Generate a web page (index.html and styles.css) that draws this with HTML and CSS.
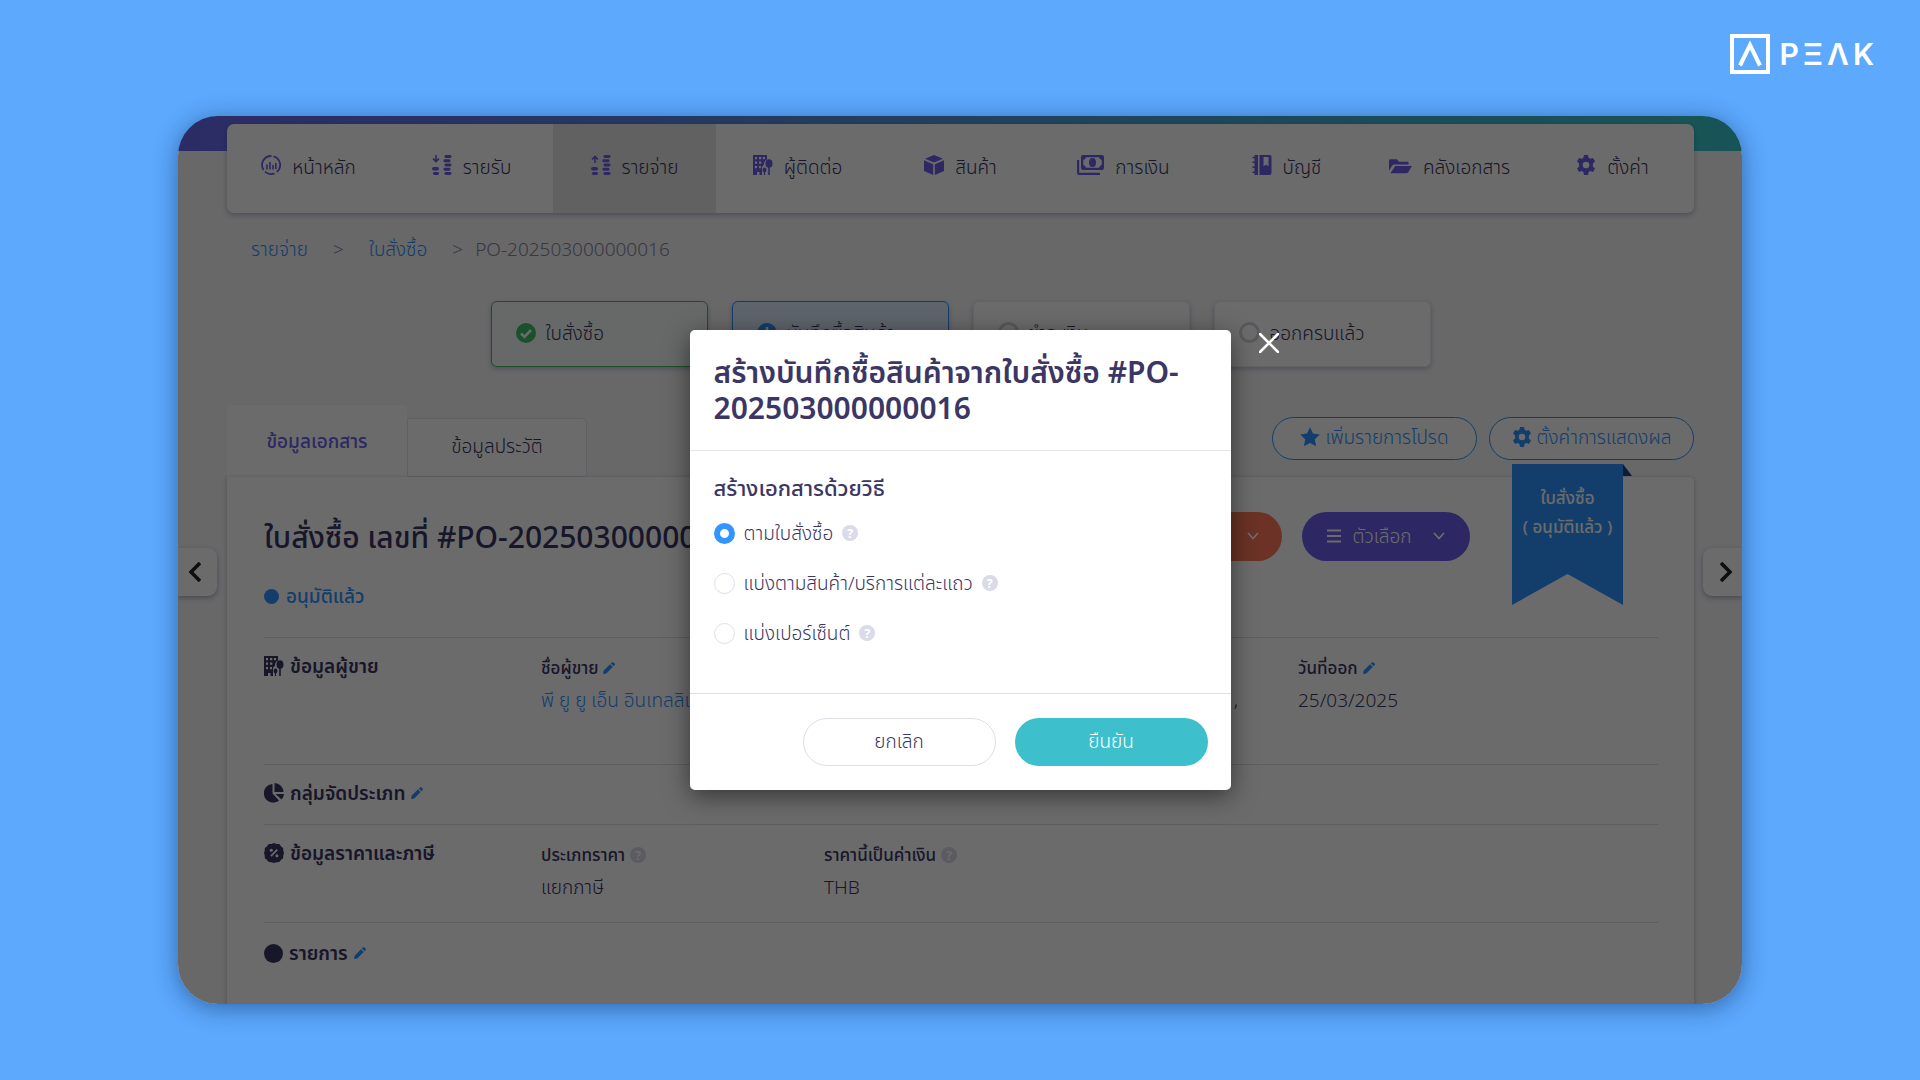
FILE: index.html
```html
<!DOCTYPE html>
<html lang="th">
<head>
<meta charset="utf-8">
<meta name="viewport" content="width=device-width, initial-scale=1">
<title>PEAK</title>
<link rel="stylesheet" href="styles.css">
</head>
<body>
<svg class="sprite" aria-hidden="true">
  <symbol id="i-chart" viewBox="0 0 20 20"><g fill="none" stroke="currentColor" stroke-width="1.800"><path d="M12.500 1.300A9 9 0 0 1 15.800 17M13.500 18.300A9 9 0 0 1 4 16.700M2.600 15A9 9 0 0 1 10.500 1"/><path d="M6 9.500v5M9 7v7.500M12 10v4.500M14.800 8v6" stroke-width="1.600"/></g></symbol>
  <symbol id="i-income" viewBox="0 0 20 20"><path d="M3.200 0h1.600v4.500L6.500 3l1 1.200L4 7.800.500 4.200l1-1.200 1.700 1.500z"/><rect x="0" y="12" width="7" height="3.400" rx="1.700"/><rect x="1" y="17" width="6" height="3" rx="1.400"/><rect x="12.500" y="0" width="7" height="3" rx="1.400"/><rect x="11.500" y="4.300" width="7" height="3" rx="1.400"/><rect x="12.500" y="8.500" width="7" height="3" rx="1.400"/><rect x="11.500" y="12.700" width="7" height="3" rx="1.400"/><rect x="12.500" y="17" width="7" height="3" rx="1.400"/></symbol>
  <symbol id="i-expense" viewBox="0 0 20 20"><path d="M3.200 8h1.600V3.500L6.500 5l1-1.200L4 .200.500 3.800l1 1.200 1.700-1.500z"/><rect x="0" y="12" width="7" height="3.400" rx="1.700"/><rect x="1" y="17" width="6" height="3" rx="1.400"/><rect x="12.500" y="0" width="7" height="3" rx="1.400"/><rect x="11.500" y="4.300" width="7" height="3" rx="1.400"/><rect x="12.500" y="8.500" width="7" height="3" rx="1.400"/><rect x="11.500" y="12.700" width="7" height="3" rx="1.400"/><rect x="12.500" y="17" width="7" height="3" rx="1.400"/></symbol>
  <symbol id="i-building" viewBox="0 0 20 20"><path fill-rule="evenodd" d="M0 0h14v4.500C12 5.500 11 7 11 9.500c0 .800-1.500 1-2 3V20H6.500v-3H4v3H0zM2 2v2.300h2V2zM6 2v2.300h2.300V2zM10 2v2.300h2V2zM2 6.500v2.300h2V6.500zM6 6.500v2.300h2.300V6.500zM2 11v2.300h2V11zM6 11v2.300h2V11z"/><ellipse cx="16" cy="8.500" rx="3.500" ry="4.300"/><path d="M15.200 12h1.600v8h-1.600z"/><ellipse cx="11.500" cy="15" rx="2" ry="2.400"/><path d="M10.900 16h1.200v4h-1.200z"/></symbol>
  <symbol id="i-box" viewBox="0 0 20 20"><path d="M10 0l9 3.700L10 7.500 1 3.700zM0 5.200l9.200 4V20L0 16zM20 5.200l-9.200 4V20L20 16z"/></symbol>
  <symbol id="i-money" viewBox="0 0 27 20"><path d="M0 5h2.200v12.800H23V20H2a2 2 0 0 1-2-2z"/><path fill-rule="evenodd" d="M6 0h19a2 2 0 0 1 2 2v11a2 2 0 0 1-2 2H6a2 2 0 0 1-2-2V2a2 2 0 0 1 2-2zm3 2.300Q8.500 4.500 6.300 5v5q2.200.500 2.700 2.700h13q.500-2.200 2.700-2.700V5Q22.500 4.500 22 2.300z"/><ellipse cx="15.500" cy="7.500" rx="3.500" ry="4.500"/></symbol>
  <symbol id="i-book" viewBox="0 0 19 20"><path d="M2 0h3.500v20H2v-2H0v-1.500h2V13H0v-1.500h2V8H0V6.500h2V3.200H0V1.700h2z"/><path fill-rule="evenodd" d="M7 0h10a2 2 0 0 1 2 2v16a2 2 0 0 1-2 2H7zm4 2v9.500l2.500-2 2.500 2V2z"/></symbol>
  <symbol id="i-folder" viewBox="0 0 24 20"><path d="M0 5.500A1.500 1.500 0 0 1 1.500 4H8l2.500 2.500H19A1.500 1.500 0 0 1 20.500 8v1.500H6Q4 9.500 3 11L0 16z"/><path d="M6.500 11H24l-4 6.500a2 2 0 0 1-1.700 1H1.500z"/></symbol>
  <symbol id="i-gear" viewBox="0 0 20 20"><path fill-rule="evenodd" d="M8 0h4l.600 2.800 1.700 1L17 3l2 3.400-2.100 2v3.200l2.100 2L17 17l-2.700-.900-1.700 1L12 20H8l-.600-2.900-1.700-1L3 17l-2-3.400 2.100-2V8.400L1 6.400 3 3l2.700.800 1.700-1zM10 6.700a3.300 3.300 0 1 0 0 6.600 3.300 3.300 0 0 0 0-6.600z"/></symbol>
  <symbol id="i-star" viewBox="0 0 20 20"><path d="M10 .300l3 6.300 6.800.900-5 4.800 1.300 6.900L10 15.900l-6.100 3.300 1.300-6.900-5-4.800L7 6.600z"/></symbol>
  <symbol id="i-pencil" viewBox="0 0 12 12"><path d="M0 12l.600-3.300L7 2.300 9.700 5l-6.400 6.400zM7.800 1.500L9 .400a1 1 0 0 1 1.400 0l1.200 1.200a1 1 0 0 1 0 1.400l-1.100 1.200z"/></symbol>
  <symbol id="i-pie" viewBox="0 0 20 20"><path d="M8.500 1v9.500l6.500 7A9.300 9.300 0 1 1 8.500 1z"/><path d="M10.500 0a9 9 0 0 1 9 9h-9zM11.500 11H20a9 9 0 0 1-2.500 5.500z"/></symbol>
  <symbol id="i-percent" viewBox="0 0 20 20"><path d="M10 0l2.500 .900 2.800.200 1.600 2.200 2.200 1.600.200 2.600L20 10l-.700 2.500-.200 2.800-2.200 1.600-1.600 2.200-2.800.200L10 20l-2.500-.700-2.800-.200-1.600-2.200L.900 15.300l-.200-2.800L0 10l.700-2.500.2-2.600 2.200-1.600 1.600-2.200 2.800-.200z"/><g class="knock"><path d="M6.300 12.500l6.400-6.400 1.200 1.200-6.400 6.400z"/><circle cx="7.300" cy="7.300" r="1.500"/><circle cx="12.900" cy="12.700" r="1.500"/></g></symbol>
  <symbol id="i-check" viewBox="0 0 20 20"><circle cx="10" cy="10" r="10"/><path d="M5 10.500l3.500 3.500L15 7" fill="none" stroke="#fff" stroke-width="2.600"/></symbol>
  <symbol id="i-plus" viewBox="0 0 20 20"><circle cx="10" cy="10" r="10"/><path d="M10 4v12M4 10h12" fill="none" stroke="#fff" stroke-width="2.600"/></symbol>
  <symbol id="i-down" viewBox="0 0 12 8"><path d="M1 1l5 5.500L11 1" fill="none" stroke="currentColor" stroke-width="1.800"/></symbol>
  <symbol id="i-menu" viewBox="0 0 14 14"><path d="M0 1.500h14M0 7h14M0 12.500h14" stroke="currentColor" stroke-width="2.200"/></symbol>
  <symbol id="i-left" viewBox="0 0 12 20"><path d="M11 1L2 10l9 9" fill="none" stroke="currentColor" stroke-width="3.600"/></symbol>
  <symbol id="i-close" viewBox="0 0 20 20"><path d="M1 1l18 18M19 1L1 19" fill="none" stroke="currentColor" stroke-width="2.600" stroke-linecap="round"/></symbol>
</svg>

<header class="brand">
  <svg class="brand-mark" viewBox="0 0 40 40" aria-hidden="true"><path d="M2 2h36v36H2zM10 31.500L20 11l10 20.500" fill="none" stroke="#fff" stroke-width="4"/></svg>
  <span class="brand-name"><span>P</span><span>Ξ</span><span>Λ</span><span>K</span></span>
</header>

<div class="screen">
  <nav class="menu">
    <a href="#"><svg class="icon"><use href="#i-chart"/></svg>หน้าหลัก</a>
    <a href="#"><svg class="icon"><use href="#i-income"/></svg>รายรับ</a>
    <a href="#" class="active"><svg class="icon"><use href="#i-expense"/></svg>รายจ่าย</a>
    <a href="#"><svg class="icon"><use href="#i-building"/></svg>ผู้ติดต่อ</a>
    <a href="#"><svg class="icon"><use href="#i-box"/></svg>สินค้า</a>
    <a href="#"><svg class="icon wide"><use href="#i-money"/></svg>การเงิน</a>
    <a href="#"><svg class="icon"><use href="#i-book"/></svg>บัญชี</a>
    <a href="#"><svg class="icon folder"><use href="#i-folder"/></svg>คลังเอกสาร</a>
    <a href="#"><svg class="icon"><use href="#i-gear"/></svg>ตั้งค่า</a>
  </nav>

  <div class="crumbs">
    <a href="#">รายจ่าย</a><span class="sep">&gt;</span><a href="#">ใบสั่งซื้อ</a><span class="sep last">&gt;</span><span>PO-202503000000016</span>
  </div>

  <ol class="steps">
    <li class="done"><svg class="icon"><use href="#i-check"/></svg>ใบสั่งซื้อ</li>
    <li class="current"><svg class="icon"><use href="#i-plus"/></svg>บันทึกซื้อสินค้า</li>
    <li><span class="ring"></span>ชำระเงิน</li>
    <li><span class="ring"></span>ออกครบแล้ว</li>
  </ol>

  <div class="tabs">
    <button class="tab selected" type="button">ข้อมูลเอกสาร</button>
    <button class="tab" type="button">ข้อมูลประวัติ</button>
    <div class="tools">
      <button class="outline" type="button"><svg class="icon"><use href="#i-star"/></svg>เพิ่มรายการโปรด</button>
      <button class="outline" type="button"><svg class="icon"><use href="#i-gear"/></svg>ตั้งค่าการแสดงผล</button>
    </div>
  </div>

  <main class="panel">
    <div class="ribbon"><span>ใบสั่งซื้อ</span><span>( อนุมัติแล้ว )</span></div>
    <div class="title-row">
      <h1>ใบสั่งซื้อ เลขที่ #PO-202503000000016</h1>
      <button class="pill orange" type="button" aria-label="สร้าง"><svg class="caret"><use href="#i-down"/></svg></button>
      <button class="pill purple" type="button"><svg class="bars"><use href="#i-menu"/></svg>ตัวเลือก<svg class="caret"><use href="#i-down"/></svg></button>
    </div>
    <p class="status">อนุมัติแล้ว</p>

    <section class="row vendor">
      <h2><svg class="icon"><use href="#i-building"/></svg>ข้อมูลผู้ขาย</h2>
      <div class="field"><h3>ชื่อผู้ขาย<svg class="edit"><use href="#i-pencil"/></svg></h3><p><a href="#">พี ยู ยู เอ็น อินเทลลิเจนท์</a></p></div>
      <div class="field address"><p>,</p></div>
      <div class="field"><h3>วันที่ออก<svg class="edit"><use href="#i-pencil"/></svg></h3><p>25/03/2025</p></div>
    </section>
    <section class="row group">
      <h2><svg class="icon"><use href="#i-pie"/></svg>กลุ่มจัดประเภท<svg class="edit"><use href="#i-pencil"/></svg></h2>
    </section>
    <section class="row price">
      <h2><svg class="icon"><use href="#i-percent"/></svg>ข้อมูลราคาและภาษี</h2>
      <div class="field"><h3>ประเภทราคา<span class="help">?</span></h3><p>แยกภาษี</p></div>
      <div class="field"><h3>ราคานี้เป็นค่าเงิน<span class="help">?</span></h3><p>THB</p></div>
    </section>
    <section class="row items">
      <h2><span class="dot"></span>รายการ<svg class="edit"><use href="#i-pencil"/></svg></h2>
    </section>
  </main>

  <button class="pager prev" type="button" aria-label="ก่อนหน้า"><svg><use href="#i-left"/></svg></button>
  <button class="pager next" type="button" aria-label="ถัดไป"><svg><use href="#i-left"/></svg></button>

  <div class="backdrop">
    <form class="modal" role="dialog" aria-labelledby="dialog-title">
      <button class="close" type="button" aria-label="ปิด"><svg><use href="#i-close"/></svg></button>
      <div class="modal-head"><h2 id="dialog-title">สร้างบันทึกซื้อสินค้าจากใบสั่งซื้อ #PO-<br>202503000000016</h2></div>
      <fieldset class="modal-body">
        <legend>สร้างเอกสารด้วยวิธี</legend>
        <label><input type="radio" name="mode" checked>ตามใบสั่งซื้อ<span class="help">?</span></label>
        <label><input type="radio" name="mode">แบ่งตามสินค้า/บริการแต่ละแถว<span class="help">?</span></label>
        <label><input type="radio" name="mode">แบ่งเปอร์เซ็นต์<span class="help">?</span></label>
      </fieldset>
      <div class="modal-foot">
        <button class="cancel" type="button">ยกเลิก</button>
        <button class="confirm" type="submit">ยืนยัน</button>
      </div>
    </form>
  </div>
</div>
</body>
</html>
```
FILE: styles.css
```css
* { box-sizing: border-box; }

body {
  margin: 0;
  min-height: 100vh;
  background: #5ca9fd;
  color: #3b3663;
  font-family: "Noto Sans", "Noto Sans Thai", sans-serif;
  font-size: 19px;
  font-weight: 300;
  line-height: 28px;
}

h1, h2, h3, p, ol, fieldset { margin: 0; padding: 0; border: 0; }
a { color: #2e95ff; text-decoration: none; }
button { font: inherit; color: inherit; border: 0; padding: 0; background: none; cursor: pointer; }
svg { fill: currentColor; display: block; flex: none; }
.sprite { position: absolute; width: 0; height: 0; }
.icon { width: 20px; height: 20px; }
.icon.wide { width: 27px; }
.icon.folder { width: 23px; }

.brand {
  display: flex;
  justify-content: flex-end;
  align-items: flex-start;
  gap: 9px;
  padding: 34px 46px 0 0;
  height: 116px;
  color: #fff;
}
.brand-mark { width: 40px; height: 40px; }
.brand-name { display: flex; gap: 4px; font: 600 30px/40px Inter, sans-serif; }

.screen {
  position: relative;
  margin: 0 178px 76px;
  overflow: hidden;
  border-radius: 40px;
  background: linear-gradient(90deg, #6a69f0, #38c9cc) 0 0 / 100% 35px no-repeat #f7f7fb;
  box-shadow: 0 4px 24px rgba(0, 20, 70, .45);
  padding: 8px 48px 0 49px;
}

.menu { display: flex; height: 89px; border-radius: 7px; background: #fff; overflow: hidden; box-shadow: 0 2px 5px rgba(40, 40, 70, .3); }
.menu a { flex: 1; display: flex; align-items: center; justify-content: center; gap: 11px; color: #3b3663; padding-bottom: 4px; }
.menu .active { background: #e7e7e7; }
.menu .icon { color: #6b5feb; margin-bottom: 3px; }

.crumbs { display: flex; align-items: center; height: 40px; margin: 16px 0 32px; padding-left: 24px; color: #85859c; }
.sep { margin: 0 25px; }
.sep.last { margin-right: 12px; }

.steps { display: flex; justify-content: center; gap: 24px; list-style: none; }
.steps li {
  display: flex; align-items: center; gap: 10px;
  width: 217px; height: 66px; padding: 0 0 3px 24px;
  background: #fff; border: 1px solid #ececf4; border-radius: 6px;
  box-shadow: 0 2px 5px rgba(40, 40, 70, .25);
}
.steps .done { border-color: #45bd6e; background: #f4fbf6; }
.steps .done .icon { color: #3fbf68; }
.steps .current { border-color: #2e95ff; background: #dfeeff; }
.steps .current .icon { color: #2e95ff; }
.ring { width: 21px; height: 21px; border: 3px solid #d5d5de; border-radius: 50%; }

.tabs { display: flex; align-items: flex-end; margin-top: 38px; }
.tab { width: 180px; height: 59px; padding-bottom: 4px; background: #fff; border: 1px solid #e4e4ee; border-radius: 0 5px 0 0; }
.tab.selected { height: 72px; padding-bottom: 0; border-color: #fff; border-radius: 5px 5px 0 0; color: #6b5feb; font-weight: 500; }
.tools { display: flex; gap: 12px; margin: 0 0 17px auto; }
.outline {
  display: flex; align-items: center; justify-content: center; gap: 5px;
  width: 205px; height: 43px; padding-bottom: 3px;
  border: 1px solid #2e95ff; border-radius: 22px; background: #fff; color: #2e95ff;
}

.panel { position: relative; min-height: 527px; padding: 35px 36px 0 37px; background: #fff; border-radius: 0 5px 0 0; box-shadow: 0 1px 4px rgba(40, 40, 70, .3); }
.title-row { display: flex; align-items: center; gap: 20px; height: 49px; padding-right: 188px; }
h1 { flex: 1; font-size: 30px; font-weight: 500; line-height: 48px; white-space: nowrap; overflow: hidden; }
.pill { display: flex; align-items: center; justify-content: center; height: 49px; border-radius: 25px; color: #fff; padding-bottom: 2px; }
.orange { width: 190px; background: #ff775a; justify-content: flex-end; padding-right: 23px; }
.purple { width: 168px; background: #6b5feb; gap: 11px; }
.caret { width: 12px; height: 8px; }
.purple .caret { margin-left: 10px; }
.bars { width: 14px; height: 14px; }
.status { display: flex; align-items: center; gap: 7px; margin: 21px 0 27px; color: #2e95ff; font-weight: 500; }
.status::before { content: ""; width: 15px; height: 15px; border-radius: 50%; background: currentColor; }

.ribbon {
  position: absolute; top: -13px; right: 71px;
  display: flex; flex-direction: column; align-items: center;
  width: 111px; height: 141px; padding-top: 19px;
  color: #fff; font-size: 17px; font-weight: 500; line-height: 29px;
  background: #2e95ff;
  clip-path: polygon(0 0, 100% 0, 100% 100%, 50% 78%, 0 100%);
}
.panel::before {
  content: ""; position: absolute; top: -13px; right: 62px;
  width: 9px; height: 12px; background: #174b85;
  clip-path: polygon(0 0, 100% 100%, 0 100%);
}

.row { display: grid; grid-template-columns: 277px 283px 474px 1fr; border-top: 1px solid #dedee9; padding-top: 14px; }
.row h2 { display: flex; align-items: center; align-self: start; gap: 6px; font-size: 19px; line-height: 28px; font-weight: 600; }
.row h3 { display: flex; align-items: center; gap: 5px; font-size: 17px; line-height: 32px; font-weight: 500; }
.field p { line-height: 32px; white-space: nowrap; }
.address { padding: 32px 60px 0 0; text-align: right; }
.vendor { min-height: 127px; }
.group { min-height: 60px; }
.price { min-height: 98px; }
.items { min-height: 82px; padding-top: 16px; }
.edit { width: 12px; height: 12px; color: #2e95ff; }
.knock { fill: #fff; }
.dot { width: 19px; height: 19px; border-radius: 50%; background: currentColor; }
.help {
  display: inline-flex; align-items: center; justify-content: center;
  width: 16px; height: 16px; border-radius: 50%;
  background: #dadae8; color: #fff; font-size: 13px; font-weight: 700; line-height: 16px;
}

.pager { position: absolute; top: 432px; width: 39px; height: 48px; display: flex; align-items: center; justify-content: center; background: #fff; color: #222; box-shadow: 0 2px 5px rgba(40, 40, 70, .35); }
.pager svg { width: 12px; height: 20px; }
.prev { left: 0; border-radius: 0 9px 9px 0; padding-right: 6px; }
.next { right: 0; border-radius: 9px 0 0 9px; padding-left: 6px; }
.next svg { transform: rotate(180deg); }

.backdrop { position: absolute; inset: 0; display: flex; justify-content: center; align-items: flex-start; padding-top: 214px; background: rgba(0, 0, 0, .58); }
.modal { position: relative; width: 541px; background: #fff; border-radius: 5px; box-shadow: 0 6px 24px rgba(0, 0, 0, .5); }
.close { position: absolute; top: 3px; right: -48px; color: #fff; }
.close svg { width: 20px; height: 20px; }
.modal-head { padding: 24px; border-bottom: 1px solid #e6e6ee; }
.modal-head h2 { font-size: 30px; line-height: 36px; font-weight: 600; white-space: nowrap; }
.modal-body { padding: 22px 24px 35px; height: 242px; }
legend { float: left; width: 100%; padding: 0; margin-bottom: 7px; font-size: 22px; font-weight: 500; }
.modal-body label { clear: both; display: flex; align-items: center; gap: 9px; height: 50px; }
.modal-body input {
  appearance: none; width: 21px; height: 21px; margin: 0;
  border: 1px solid #dedeea; border-radius: 50%; background: #fff;
}
.modal-body input:checked { border: 6px solid #3395ff; }
.modal-foot { display: flex; justify-content: flex-end; gap: 19px; padding: 24px 23px; border-top: 1px solid #dcdcea; }
.modal-foot button { width: 193px; height: 48px; border-radius: 24px; padding-bottom: 2px; }
.cancel { border: 1px solid #dedeea; }
.confirm { background: #3dbfcc; color: #fff; }
```
